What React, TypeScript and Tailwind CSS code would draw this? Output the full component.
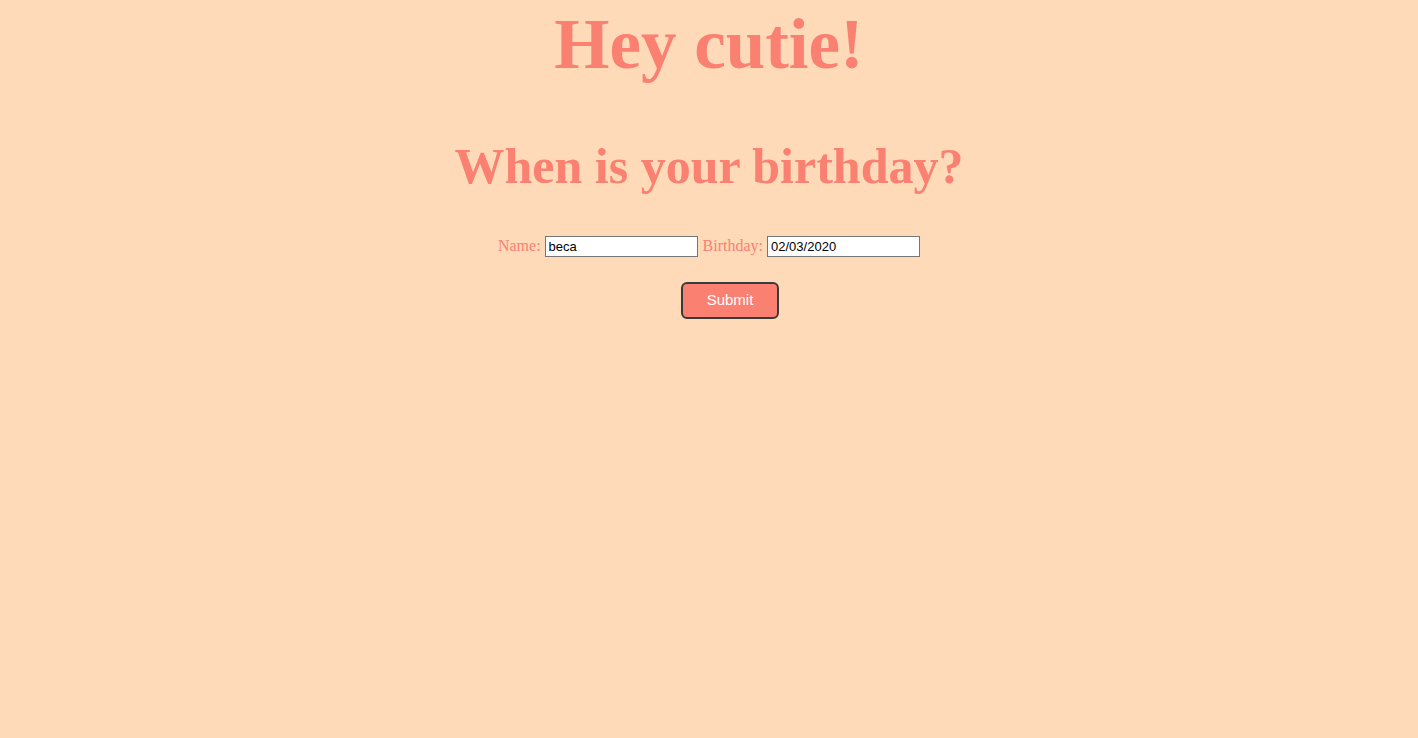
export default function App() {
  return (
    <div className="min-h-[738px] w-full bg-[#ffdab9] text-center text-[#fa8072] font-['Liberation_Serif',serif]">
      <h1 className="pt-[3px] text-[71px] font-bold leading-[82px]">Hey cutie!</h1>
      <h2 className="mt-[52px] text-[50px] font-bold leading-[58px]">When is your birthday?</h2>

      <form className="mt-[39px] flex flex-col items-center">
        <div className="flex items-center justify-center gap-[4px] text-[16px]">
          <label htmlFor="name">Name:</label>
          <input
            id="name"
            defaultValue="beca"
            className="h-[21px] w-[153px] border border-[#767676] bg-white px-[3px] text-[13px] text-black font-['Liberation_Sans',sans-serif] outline-none"
          />
          <label htmlFor="bday" className="ml-[1px]">Birthday:</label>
          <input
            id="bday"
            defaultValue="02/03/2020"
            className="h-[21px] w-[153px] border border-[#767676] bg-white px-[3px] text-[13px] text-black font-['Liberation_Sans',sans-serif] outline-none"
          />
        </div>
        <button
          type="button"
          className="ml-[42px] mt-[24px] h-[37px] w-[98px] rounded-[6px] border-2 border-[#3a3a3a] bg-[#fa8072] text-[15px] font-medium text-white font-['Liberation_Sans',sans-serif]"
        >
          Submit
        </button>
      </form>
    </div>
  )
}
